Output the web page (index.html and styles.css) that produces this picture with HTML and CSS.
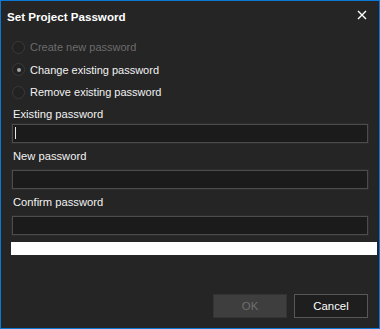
FILE: index.html
```html
<!DOCTYPE html>
<html lang="en">
<head>
    <meta charset="UTF-8">
    <title>Set Project Password</title>
    <link rel="stylesheet" href="styles.css">
</head>
<body>
    <div class="dialog">
        <div class="titlebar">
            <span class="title">Set Project Password</span>
            <span class="close">
                <svg width="10" height="10" viewBox="0 0 10 10"><path d="M1 1L9 9M9 1L1 9" stroke="#fff" stroke-width="1.4"/></svg>
            </span>
        </div>

        <div class="content">
            <div class="options">
                <div class="radio disabled"><span class="dot"></span>Create new password</div>
                <div class="radio checked"><span class="dot"></span>Change existing password</div>
                <div class="radio"><span class="dot"></span>Remove existing password</div>
            </div>

            <div class="field first">
                <div class="label">Existing password</div>
                <div class="input"><span class="caret"></span></div>
            </div>
            <div class="field">
                <div class="label">New password</div>
                <div class="input"></div>
            </div>
            <div class="field">
                <div class="label">Confirm password</div>
                <div class="input"></div>
            </div>

            <div class="strength"></div>

            <div class="actions">
                <button class="btn ok" disabled>OK</button>
                <button class="btn cancel">Cancel</button>
            </div>
        </div>
    </div>
</body>
</html>
```

FILE: styles.css
```css
    body {
        margin: 0;
        background-color: #252525;
        font-family: "Liberation Sans", Arial, sans-serif;
        font-size: 11px;
        color: #f2f2f2;
    }

    .dialog {
        width: 380px;
        height: 329px;
        box-sizing: border-box;
        border: 1px solid #0a78d4;
        background-color: #252525;
        display: flex;
        flex-direction: column;
    }

    .titlebar {
        height: 33px;
        display: flex;
        align-items: center;
        justify-content: space-between;
        padding: 0 12px 2px 6px;
        box-sizing: border-box;
    }

    .title {
        font-weight: bold;
        font-size: 11.6px;
        color: #fff;
    }

    .close {
        display: flex;
        margin-top: -4px;
    }

    .content {
        flex: 1;
        display: flex;
        flex-direction: column;
        padding: 2px 11px 0 11px;
    }

    .options {
        display: flex;
        flex-direction: column;
    }

    .radio {
        height: 22.5px;
        display: flex;
        align-items: center;
        gap: 5px;
    }

    .radio.disabled {
        color: #6c6c6c;
    }

    .dot {
        width: 11px;
        height: 11px;
        border-radius: 50%;
        border: 1px solid #3a3a3a;
        background-color: #222;
        display: flex;
        align-items: center;
        justify-content: center;
    }

    .radio.checked .dot::after {
        content: "";
        width: 4px;
        height: 4px;
        border-radius: 50%;
        background-color: #a4a4a4;
    }

    .field {
        display: flex;
        flex-direction: column;
        margin-top: 3px;
    }

    .field + .field {
        margin-top: 6px;
    }

    .label {
        height: 14px;
        line-height: 14px;
        font-size: 11.2px;
        margin-left: 1px;
    }

    .input {
        margin-top: 7px;
        height: 19px;
        box-sizing: border-box;
        border: 1px solid #4c4c4c;
        box-shadow: 0 0 0 1px #2c2c2c;
        background-color: #1b1b1b;
        display: flex;
        align-items: center;
        padding-left: 2px;
    }

    .field.first .input {
        margin-top: 3px;
    }

    .caret {
        width: 1px;
        height: 12px;
        background-color: #e8e8e8;
    }

    .strength {
        height: 13px;
        margin: 7px -9px 0 -1px;
        background-color: #fff;
    }

    .actions {
        margin-top: 39px;
        display: flex;
        justify-content: flex-end;
        gap: 7px;
    }

    .btn {
        width: 74px;
        height: 24px;
        font-family: "Liberation Sans", Arial, sans-serif;
        font-size: 11.4px;
        padding: 0;
    }

    .btn.ok {
        background-color: #3e3e3e;
        border: 1px solid #343434;
        color: #6e6e6e;
    }

    .btn.cancel {
        background-color: #1e1e1e;
        border: 1px solid #575757;
        color: #fff;
    }
```
